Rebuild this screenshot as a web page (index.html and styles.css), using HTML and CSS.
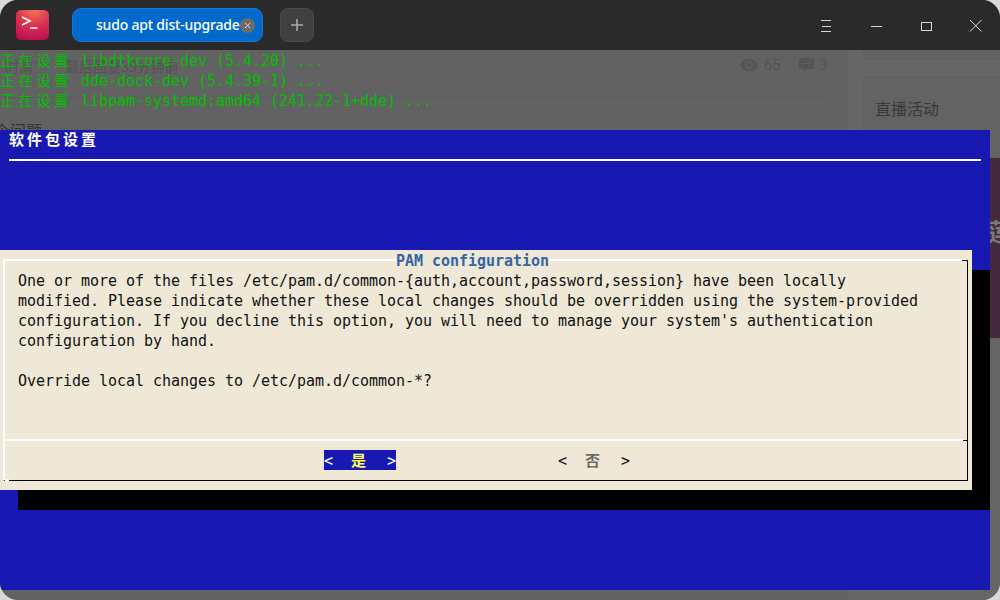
FILE: index.html
```html
<!DOCTYPE html>
<html lang="zh">
<head>
<meta charset="utf-8">
<title>sudo apt dist-upgrade</title>
<link rel="stylesheet" href="styles.css">
</head>
<body>
<div class="window">
  <header class="titlebar">
    <svg class="logo" width="33" height="30" viewBox="0 0 33 30">
      <defs>
        <radialGradient id="lg" cx="0.55" cy="0" r="1">
          <stop offset="0" stop-color="#f6744e"/>
          <stop offset="0.55" stop-color="#d92f52"/>
          <stop offset="1" stop-color="#bd1253"/>
        </radialGradient>
      </defs>
      <rect width="33" height="30" rx="5" fill="url(#lg)"/>
      <path d="M6 7l8 4-8 4" fill="none" stroke="#fff" stroke-width="1.6"/>
      <path d="M14 18h7.5" fill="none" stroke="#fff" stroke-width="1.6"/>
    </svg>
    <div class="tab">
      <span class="tab-label">sudo apt dist-upgrade</span>
      <span class="tab-close">
        <svg width="15" height="15" viewBox="0 0 15 15"><path d="M5 5l5 5M10 5l-5 5" stroke="#d8d8d8" stroke-width="1" fill="none"/></svg>
      </span>
    </div>
    <div class="add">
      <svg width="14" height="14" viewBox="0 0 14 14"><path d="M7 1v12M1 7h12" stroke="#a9a9a9" stroke-width="1.6" fill="none"/></svg>
    </div>
    <div class="controls">
      <svg class="ctl" width="50" height="50" viewBox="0 0 50 50"><path d="M21 20.500h10M22 26.500h9M21 31.500h10" stroke="#d3d7e3" fill="none"/></svg>
      <svg class="ctl" width="50" height="50" viewBox="0 0 50 50"><path d="M21 26.500h11" stroke="#d3d7e3" fill="none"/></svg>
      <svg class="ctl" width="50" height="50" viewBox="0 0 50 50"><rect x="21.500" y="22.500" width="10" height="8" stroke="#d3d7e3" fill="none"/></svg>
      <svg class="ctl" width="50" height="50" viewBox="0 0 50 50"><path d="M20 20l11.500 11.500M31.500 20L20 31.500" stroke="#d3d7e3" fill="none"/></svg>
    </div>
  </header>
  <main class="terminal">
    <div class="page">
      <div class="page-main">
        <div class="meta">
          <span class="meta-time">时前</span>
          <span class="meta-reply">最后回复35分钟前</span>
          <span class="stat">
            <svg width="18" height="12" viewBox="0 0 24 16"><path d="M12 0C6.500 0 2 3.300 0 8c2 4.700 6.500 8 12 8s10-3.300 12-8c-2-4.700-6.500-8-12-8zm0 13.300a5.300 5.300 0 1 1 0-10.600 5.300 5.300 0 0 1 0 10.600zM12 5a3 3 0 1 0 0 6 3 3 0 0 0 0-6z" fill="#545457"/></svg>
            65
          </span>
          <span class="stat">
            <svg width="15" height="14" viewBox="0 0 15 14"><path d="M2 0h11a2 2 0 0 1 2 2v7a2 2 0 0 1-2 2H8l-2.500 3L5 11H2a2 2 0 0 1-2-2V2a2 2 0 0 1 2-2z" fill="#545457"/><path d="M4 5.500h1M7 5.500h1M10 5.500h1" stroke="#7a7a7a"/></svg>
            3
          </span>
        </div>
        <div class="question">个问题</div>
      </div>
      <aside class="page-side">
        <div class="card card-top"></div>
        <div class="card card-live">直播活动</div>
        <div class="banner"><span class="banner-text">莲</span></div>
        <div class="scroll-thumb"></div>
      </aside>
    </div>

    <div class="output">
      <div class="line"><span class="cjk">正在设置</span> libdtkcore-dev (5.4.20) ...</div>
      <div class="line"><span class="cjk">正在设置</span> dde-dock-dev (5.4.39-1) ...</div>
      <div class="line"><span class="cjk">正在设置</span> libpam-systemd:amd64 (241.22-1+dde) ...</div>
    </div>

    <section class="screen">
      <div class="backtitle"><span class="cjk">软件包设置</span></div>
      <div class="rule"></div>
      <div class="dialog">
        <div class="box">
          <div class="box-title">PAM configuration</div>
          <div class="message">
            <div class="line">One or more of the files /etc/pam.d/common-{auth,account,password,session} have been locally</div>
            <div class="line">modified. Please indicate whether these local changes should be overridden using the system-provided</div>
            <div class="line">configuration. If you decline this option, you will need to manage your system's authentication</div>
            <div class="line">configuration by hand.</div>
            <div class="line"> </div>
            <div class="line">Override local changes to /etc/pam.d/common-*?</div>
          </div>
          <div class="actions">
            <div class="btn btn-active">&lt;  <span class="cjk btn-label">是</span>  &gt;</div>
            <div class="btn">&lt;  <span class="cjk btn-label">否</span>  &gt;</div>
          </div>
        </div>
      </div>
    </section>
  </main>
</div>
</body>
</html>
```
FILE: styles.css
```css
* { box-sizing: border-box; }

html, body {
  margin: 0;
  height: 100%;
  background: #d8d8d8;
}

.window {
  width: 1000px;
  height: 600px;
  border-radius: 18px;
  overflow: hidden;
  display: flex;
  flex-direction: column;
  background: #626262;
}

/* title bar */
.titlebar {
  flex: 0 0 50px;
  display: flex;
  align-items: center;
  padding-left: 16px;
  background: #2a2a2a;
}

.logo { flex: none; }

.tab {
  width: 191px;
  height: 34px;
  margin-left: 23px;
  padding: 0 8px 0 24px;
  display: flex;
  align-items: center;
  justify-content: space-between;
  background: #0069cc;
  border: 1px solid #1a78d2;
  border-radius: 9px;
}

.tab-label {
  font: 500 14px/20px "Noto Sans", sans-serif;
  letter-spacing: -0.2px;
  color: #fff;
  white-space: nowrap;
  margin-left: -1px;
}

.tab-close {
  width: 15px;
  height: 15px;
  border-radius: 50%;
  background: #6c6c6c;
  display: flex;
}

.add {
  width: 34px;
  height: 34px;
  margin-left: 17px;
  display: flex;
  align-items: center;
  justify-content: center;
  background: #404040;
  border: 1px solid #4a4a4a;
  border-radius: 8px;
}

.controls {
  margin-left: auto;
  display: flex;
}

.ctl { display: block; }

/* terminal */
.terminal {
  position: relative;
  z-index: 0;
  flex: 1;
  font: 15px/20px "DejaVu Sans Mono", monospace;
  letter-spacing: -0.03px;
}

.line {
  height: 20px;
  white-space: pre;
}

.cjk {
  font-family: "Noto Sans CJK SC", "DejaVu Sans Mono", sans-serif;
  font-size: 15px;
  letter-spacing: 3px;
  line-height: 20px;
}

.output {
  height: 80px;
  color: #00c000;
}

.screen {
  width: 990px;
  height: 460px;
  background: #1818b2;
}

.backtitle {
  height: 20px;
  padding-left: 9px;
  color: #fff;
  font-weight: 700;
  line-height: 18px;
  white-space: pre;
}

.backtitle .cjk { line-height: 18px; }

.rule {
  height: 2px;
  margin: 9px 9px 0;
  background: #fff;
}

.dialog {
  width: 972px;
  height: 240px;
  margin-top: 89px;
  padding: 9px 4px 9px 3px;
  background: #efe8d6;
  box-shadow: 18px 20px 0 #000;
  color: #111;
}

.box {
  position: relative;
  height: 222px;
  display: flex;
  flex-direction: column;
  border-top: 2px solid #fff;
  border-left: 2px solid #fff;
  border-right: 1px solid #000;
  border-bottom: 1px solid #000;
}

.box::before {
  content: "";
  position: absolute;
  top: -1.500px;
  right: 0;
  width: 5px;
  height: 1px;
  background: #000;
}

.box::after {
  content: "";
  position: absolute;
  left: 0;
  bottom: -1px;
  width: 4px;
  height: 2px;
  background: #fff;
}

.box-title {
  position: absolute;
  top: -10px;
  left: 391px;
  height: 20px;
  background: #efe8d6;
  color: #3465a4;
  font-weight: 700;
  white-space: pre;
}

.message {
  flex: 0 0 178px;
  padding: 10px 0 0 13px;
}

.actions {
  position: relative;
  flex: 1;
  margin-right: 4px;
  padding: 9px 0 0 319px;
  display: flex;
  align-items: flex-start;
  gap: 162px;
  border-top: 2px solid #fff;
}

.actions::after {
  content: "";
  position: absolute;
  top: -1.500px;
  right: -4px;
  width: 4px;
  height: 1px;
  background: #000;
}

.btn {
  width: 72px;
  height: 20px;
  white-space: pre;
  color: #111;
}

.btn .btn-label {
  font-weight: 700;
  color: #6b6b6b;
}

.btn-active {
  background: #1818b2;
  color: #fff;
}

.btn-active .btn-label {
  color: #ffff55;
}

/* page ghosted behind the translucent terminal */
.page {
  position: absolute;
  inset: 0;
  z-index: -1;
  display: flex;
  font-family: "Noto Sans CJK SC", sans-serif;
  letter-spacing: 0;
  color: #525252;
  overflow: hidden;
}

.page-main {
  flex: 0 0 828px;
}

.meta {
  height: 48px;
  padding: 6px 0 0 5px;
  display: flex;
  align-items: flex-start;
  border-bottom: 1px solid #5c5c5c;
  font-size: 14px;
}

.meta-reply { margin-left: 32px; margin-right: auto; }

.stat {
  display: flex;
  align-items: center;
  gap: 6px;
  height: 16px;
  margin-top: 1px;
  margin-left: 18px;
  font: 15px/16px Roboto, sans-serif;
  color: #545457;
}

.question {
  margin: 22px 0 0 -6px;
  font-size: 16px;
  line-height: 20px;
  color: #333;
}

.page-side {
  position: relative;
  flex: 0 0 172px;
  padding-left: 32px;
  background: linear-gradient(90deg, #626262 20px, #666 20px);
}

.card {
  background: #636363;
  border: 1px solid #6a6a6a;
  border-radius: 6px;
}

.card-top {
  height: 13px;
  margin-top: -1px;
  border-top: 0;
  border-radius: 0 0 6px 6px;
}

.card-live {
  height: 84px;
  margin-top: 12px;
  padding: 22px 0 0 14px;
  font-size: 16px;
  line-height: 22px;
  color: #383838;
  border-bottom: 0;
  border-radius: 6px 6px 0 0;
}

.banner {
  height: 180px;
  background: #432a3f;
  margin-left: 98px;
  overflow: hidden;
}

.banner-text {
  display: block;
  margin: 58px 0 0 30px;
  font-size: 24px;
  font-weight: 700;
  line-height: 30px;
  color: #7f7878;
  white-space: nowrap;
}

.scroll-thumb {
  position: absolute;
  top: 434px;
  right: 2px;
  width: 7px;
  height: 35px;
  border-radius: 3px;
  background: #666;
  border: 1px solid #737373;
}
```
